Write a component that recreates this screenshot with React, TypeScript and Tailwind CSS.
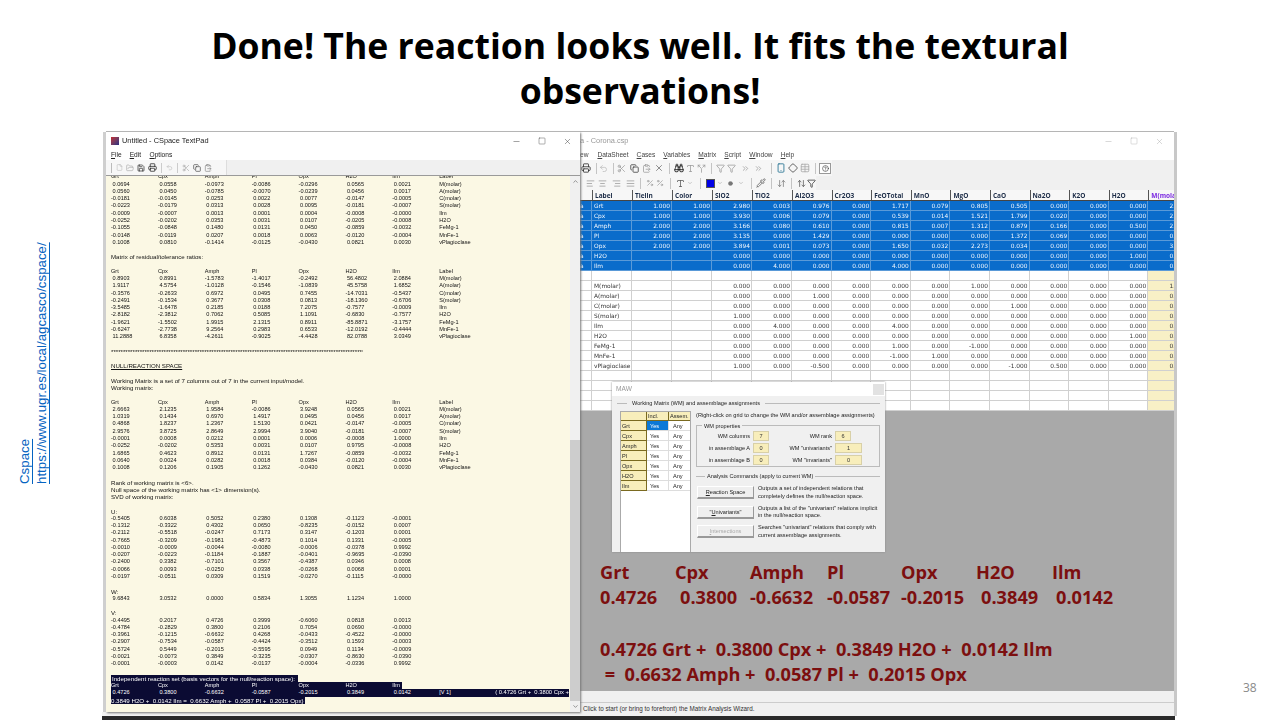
import React from "react";
import { Minus, Square, X, File, FolderOpen, Save, Printer, Undo2, Scissors, Copy, ClipboardPaste, ChevronUp, ChevronDown, Filter, Table, HelpCircle, ArrowDownUp, Diamond, ChevronsRight, Pipette, AlignLeft, AlignCenter, AlignRight, AlignJustify, Percent, Type, Circle, Smartphone, Split, Binoculars, ArrowUpDown } from "lucide-react";

type Row = string[];
const m1: Row[] = [
  ["0.0694","0.0558","-0.0973","-0.0086","-0.0296","0.0565","0.0021","M(molar)"],
  ["0.0560","0.0450","-0.0785","-0.0070","-0.0239","0.0456","0.0017","A(molar)"],
  ["-0.0181","-0.0145","0.0253","0.0022","0.0077","-0.0147","-0.0005","C(molar)"],
  ["-0.0223","-0.0179","0.0313","0.0028","0.0095","-0.0181","-0.0007","S(molar)"],
  ["-0.0009","-0.0007","0.0013","0.0001","0.0004","-0.0008","-0.0000","Ilm"],
  ["-0.0252","-0.0202","0.0353","0.0031","0.0107","-0.0205","-0.0008","H2O"],
  ["-0.1055","-0.0848","0.1480","0.0131","0.0450","-0.0859","-0.0032","FeMg-1"],
  ["-0.0148","-0.0119","0.0207","0.0018","0.0063","-0.0120","-0.0004","MnFe-1"],
  ["0.1008","0.0810","-0.1414","-0.0125","-0.0430","0.0821","0.0030","vPlagioclase"],
];
const m2: Row[] = [
  ["0.8903","0.8991","-1.5783","-1.4017","-0.2492","56.4802","2.0884","M(molar)"],
  ["1.9117","4.5754","-1.0128","-0.1546","-1.0839","45.5758","1.6852","A(molar)"],
  ["-0.3576","-0.2633","0.6972","0.0495","0.7455","-14.7031","-0.5437","C(molar)"],
  ["-0.2491","-0.1534","0.3677","0.0308","0.0813","-18.1360","-0.6706","S(molar)"],
  ["-3.5485","-1.6478","0.2185","0.0188","7.2075","-0.7577","-0.0009","Ilm"],
  ["-2.8182","-2.3812","0.7062","0.5085","1.1091","-0.6830","-0.7577","H2O"],
  ["-1.9621","-1.5502","1.9915","2.1315","0.8911","-85.8871","-3.1757","FeMg-1"],
  ["-0.6247","-2.7738","9.2564","0.2983","0.6533","-12.0192","-0.4444","MnFe-1"],
  ["11.2888","6.8358","-4.2611","-0.9025","-4.4428","82.0788","3.0349","vPlagioclase"],
];
const m3: Row[] = [
  ["2.6663","2.1235","1.9584","-0.0086","3.9248","0.0565","0.0021","M(molar)"],
  ["1.0319","0.1434","0.6970","1.4917","0.0495","0.0456","0.0017","A(molar)"],
  ["0.4868","1.8237","1.2367","1.5130","0.0421","-0.0147","-0.0005","C(molar)"],
  ["2.9576","3.8725","2.8649","2.9994","3.9040","-0.0181","-0.0007","S(molar)"],
  ["-0.0001","0.0008","0.0212","0.0001","0.0006","-0.0008","1.0000","Ilm"],
  ["-0.0252","-0.0202","0.5353","0.0031","0.0107","0.9795","-0.0008","H2O"],
  ["1.6865","0.4623","0.8912","0.0131","1.7267","-0.0859","-0.0032","FeMg-1"],
  ["0.0640","0.0024","0.0282","0.0018","0.0384","-0.0120","-0.0004","MnFe-1"],
  ["0.1008","0.1206","0.1905","0.1262","-0.0430","0.0821","0.0030","vPlagioclase"],
];
const mU: Row[] = [
  ["-0.5405","0.6038","0.5052","0.2380","0.1308","-0.1123","-0.0001"],
  ["-0.1312","-0.3322","0.4302","0.0650","-0.8235","-0.0152","0.0007"],
  ["-0.2112","-0.5518","-0.0247","0.7173","0.3147","-0.1203","0.0001"],
  ["-0.7665","-0.3209","-0.1981","-0.4873","0.1014","0.1331","-0.0005"],
  ["-0.0010","-0.0009","-0.0044","-0.0080","-0.0006","-0.0378","0.9992"],
  ["-0.0207","-0.0223","-0.1184","-0.1887","-0.0401","-0.9695","-0.0390"],
  ["-0.2400","0.3382","-0.7101","0.3567","-0.4387","0.0346","0.0008"],
  ["-0.0066","0.0093","-0.0250","0.0338","-0.0268","0.0068","0.0001"],
  ["-0.0197","-0.0511","0.0309","0.1519","-0.0270","-0.1115","-0.0000"],
];
const mV: Row[] = [
  ["-0.4495","0.2017","0.4726","0.3999","-0.6060","0.0818","0.0013"],
  ["-0.4784","-0.2829","0.3800","0.2106","0.7054","0.0690","-0.0000"],
  ["-0.3961","-0.1215","-0.6632","0.4268","-0.0433","-0.4522","-0.0000"],
  ["-0.2907","-0.7534","-0.0587","-0.4424","-0.3512","0.1593","-0.0003"],
  ["-0.5724","0.5449","-0.2015","-0.5595","0.0949","0.1134","-0.0009"],
  ["-0.0021","-0.0073","0.3849","-0.3235","-0.0307","-0.8630","-0.0390"],
  ["-0.0001","-0.0003","0.0142","-0.0137","-0.0004","-0.0336","0.9992"],
];
const H1 = ["Grt","Cpx","Amph","Pl","Opx","H2O","Ilm","Label"];
const H2 = ["Grt","Cpx","Amph","Pl","Opx","H2O","Ilm"];

function TxtRow({ cells, head = false, cls = "" }: { cells: Row; head?: boolean; cls?: string }) {
  return (
    <div className={"grid grid-cols-[46.9px_46.9px_46.9px_46.9px_46.9px_46.9px_46.9px_46.9px] h-[7.28px] text-[5.6px] " + cls}>
      {cells.map((c, i) => (
        <span key={i} className={i < 7 && !head && !c.startsWith("-") ? "pl-[1.5px]" : ""}>{c}</span>
      ))}
    </div>
  );
}
const Blank = () => <div className="h-[7.28px]" />;
const Para = ({ children, cls = "" }: { children: React.ReactNode; cls?: string }) => <div className={"h-[7.28px] text-[6.15px] " + cls}>{children}</div>;

function Matrix({ head, rows }: { head: Row; rows: Row[] }) {
  return (
    <>
      <TxtRow cells={head} head />
      {rows.map((r, i) => <TxtRow key={i} cells={r} />)}
    </>
  );
}

function TextPad() {
  return (
    <div className="absolute left-[106px] top-[132px] w-[474px] h-[580px] bg-white flex flex-col overflow-hidden shadow-[-3px_0_0_#cfcfcf,0_-1px_0_#b5b5b5,1px_1px_2px_#777] font-['Liberation_Sans',sans-serif] text-[#111] blur-[0.35px]">
      <div className="h-[18px] shrink-0 flex items-center pl-[5px] pr-[8px]">
        <div className="w-[8px] h-[8px] mr-[3px] bg-gradient-to-br from-[#c0272d] to-[#2a2a80]" />
        <span className="text-[7.4px] text-[#222]">Untitled - CSpace TextPad</span>
        <div className="ml-auto flex items-center gap-[17px] text-[#333]">
          <Minus size={9} strokeWidth={1.2} />
          <Square size={8} strokeWidth={1.2} />
          <X size={9} strokeWidth={1.2} />
        </div>
      </div>
      <div className="h-[10px] shrink-0 flex items-center pl-[5px] gap-[8px] text-[6.6px] text-[#222]">
        <span><u>F</u>ile</span><span><u>E</u>dit</span><span className="ml-[0.5px]"><u>O</u>ptions</span>
      </div>
      <div className="h-[16px] shrink-0 bg-[#f0f0f0] border-b border-[#9a9a9a] flex">
        <div className="bg-[#f7f7f7] h-full w-[121px] flex items-center pl-[5px] gap-[3px] border-r border-[#ddd]">
          <div className="w-px h-[10px] bg-[#bbb] mr-[1px]" />
          <File size={7} className="text-[#999]" strokeWidth={1.2} />
          <FolderOpen size={8} className="text-[#aaa]" />
          <Save size={8} className="text-[#222]" />
          <Printer size={9} className="text-[#222]" />
          <div className="w-px h-[10px] bg-[#ccc] mx-[1px]" />
          <Undo2 size={7} className="text-[#bbb]" />
          <div className="w-px h-[10px] bg-[#ccc] mx-[1px]" />
          <Scissors size={8} className="text-[#aaa]" />
          <Copy size={8} className="text-[#444]" />
          <ClipboardPaste size={8} className="text-[#888]" />
        </div>
      </div>
      <div className="flex-1 flex min-h-0">
        <div className="w-[464px] bg-[#fbf8e4] overflow-hidden pl-[5px] leading-[7.28px] whitespace-pre">
          <div className="-mt-[2.6px]">
            <Matrix head={H1} rows={m1} />
            <Blank />
            <Para>Matrix of residual/tolerance ratios:</Para>
            <Blank />
            <Matrix head={H1} rows={m2} />
            <Blank />
            <Para cls="overflow-hidden w-[252px]">{"*".repeat(110)}</Para>
            <Blank />
            <Para><u>NULL/REACTION SPACE</u></Para>
            <Blank />
            <Para>Working Matrix is a set of 7 columns out of 7 in the current input/model.</Para>
            <Para>Working matrix:</Para>
            <Blank />
            <Matrix head={H1} rows={m3} />
            <Blank />
            <Para>Rank of working matrix is &lt;6&gt;.</Para>
            <Para>Null space of the working matrix has &lt;1&gt; dimension(s).</Para>
            <Para>SVD of working matrix:</Para>
            <Blank />
            <Para>U:</Para>
            {mU.map((r, i) => <TxtRow key={i} cells={r} />)}
            <Blank />
            <Para>W:</Para>
            <TxtRow cells={["9.6843","3.0532","0.0000","0.5834","1.3055","1.1234","1.0000"]} />
            <Blank />
            <Para>V:</Para>
            {mV.map((r, i) => <TxtRow key={i} cells={r} />)}
            <Blank />
            <Para cls="bg-[#0b0b33] text-white w-[187px] pl-[1px]">Independent reaction set (basis vectors for the null/reaction space):</Para>
            <TxtRow cells={H2} head cls="bg-[#0b0b33] text-white w-[291px]" />
            <div className="relative w-[458px] h-[7.28px] bg-[#0b0b33] text-white">
              <TxtRow cells={["0.4726","0.3800","-0.6632","-0.0587","-0.2015","0.3849","0.0142","[V 1]"]} />
              <span className="absolute right-0 top-0 text-[5.8px]">( 0.4726 Grt +  0.3800 Cpx +</span>
            </div>
            <Para cls="bg-[#0b0b33] text-white w-[194px]">0.3849 H2O +  0.0142 Ilm =  0.6632 Amph +  0.0587 Pl +  0.2015 Opx)</Para>
          </div>
        </div>
        <div className="w-[10px] bg-[#f0f0f0] flex flex-col items-center text-[#555]">
          <ChevronUp size={7} className="mt-[2px] shrink-0" />
          <div className="mt-[255px] w-full flex-1 bg-[#cdcdcd]" />
          <ChevronDown size={7} className="my-[2px] shrink-0" />
        </div>
      </div>
    </div>
  );
}

const I = "text-[#999]";
const Bar = () => <div className="w-px h-[11px] bg-[#c4c4c4]" />;
type Item = [number, React.ReactNode];
function ToolRow({ items, cls }: { items: Item[]; cls: string }) {
  let prev = 578;
  return (
    <div className={"flex items-center " + cls}>
      {items.map(([x, el], i) => {
        const ml = x - 5 - prev;
        prev = x + 5;
        return <div key={i} className="w-[10px] h-[12px] flex items-center justify-center shrink-0" style={{ marginLeft: ml }}>{el}</div>;
      })}
    </div>
  );
}
const row1: Item[] = [
  [586,<Printer size={10} className="text-[#333]" />],[596,<Bar />],[603,<Undo2 size={9} className="text-[#bbb]" />],[613,<Bar />],
  [621,<Scissors size={9} className={I} />],[634,<Copy size={9} className="text-[#333]" />],[646,<ClipboardPaste size={9} className={I} />],[659,<X size={10} className="text-[#777]" />],[669,<Bar />],
  [679,<Binoculars size={10} className="text-[#111]" />],[690,<Type size={9} className={I} />],[701,<Split size={9} className={I} />],[711,<Bar />],
  [720,<Filter size={9} className={I} />],[731,<Filter size={9} className={I} />],[745,<ChevronsRight size={9} className={I} />],[758,<ChevronsRight size={9} className={I} />],[771,<Bar />],
  [781,<Smartphone size={10} className="text-[#1f6f8f]" />],[793,<Diamond size={10} className="text-[#444]" />],[805,<Table size={10} className="text-[#aaa]" />],[815,<Bar />],
  [825,<div className="w-[12px] h-[11px] border border-[#999] bg-white flex items-center justify-center shrink-0"><HelpCircle size={7} className="text-[#333]" /></div>],
];
const row2: Item[] = [
  [590,<AlignLeft size={9} className={I} />],[602,<AlignCenter size={9} className={I} />],[616,<AlignRight size={9} className={I} />],[630,<AlignJustify size={9} className={I} />],[640,<Bar />],
  [650,<Percent size={8} className={I} />],[660,<Percent size={8} className={I} />],[670,<Bar />],
  [680,<Type size={9} className="text-[#555]" />],[690,<ChevronDown size={6} className={I} />],[700,<Bar />],
  [710,<div className="w-[9px] h-[9px] bg-[#0000e6] shrink-0 border border-[#555]" />],[720,<ChevronDown size={6} className={I} />],[730,<Circle size={5} className="text-[#777] fill-[#777]" />],[741,<ChevronDown size={6} className={I} />],[751,<Bar />],
  [761,<Pipette size={10} className="text-[#666]" />],[771,<Bar />],[781,<ArrowDownUp size={9} className="text-[#777]" />],[791,<Bar />],
  [801,<ArrowUpDown size={9} className="text-[#555]" />],[811,<Filter size={9} className="text-[#333]" />],
];

function Toolbars() {
  return (
    <div className="h-[30px] shrink-0 bg-[#f0f0f0] flex flex-col">
      <ToolRow items={row1} cls="h-[16px] w-[254px] bg-[#f6f6f6]" />
      <ToolRow items={row2} cls="h-[14px] w-[238px] bg-[#f6f6f6]" />
    </div>
  );
}

const Z = "0.000";
const blueRows: Row[] = [
  ["Grt","1.000","1.000","2.980","0.003","0.976",Z,"1.717","0.079","0.805","0.505",Z,Z,Z,"2.000"],
  ["Cpx","1.000","1.000","3.930","0.006","0.079",Z,"0.539","0.014","1.521","1.799","0.020",Z,Z,"2.000"],
  ["Amph","2.000","2.000","3.166","0.080","0.610",Z,"0.815","0.007","1.312","0.879","0.166",Z,"0.500","2.000"],
  ["Pl","2.000","2.000","3.135",Z,"1.429",Z,Z,Z,Z,"1.372","0.069",Z,Z,"0.000"],
  ["Opx","2.000","2.000","3.894","0.001","0.073",Z,"1.650","0.032","2.273","0.034",Z,Z,Z,"3.000"],
  ["H2O","","",Z,Z,Z,Z,Z,Z,Z,Z,Z,Z,"1.000","0.000"],
  ["Ilm","","",Z,"4.000",Z,Z,"4.000",Z,Z,Z,Z,Z,Z,"0.000"],
];
const E: Row = ["","","","","","","","","","","","","","",""];
const lowRows: Row[] = [
  E,
  ["M(molar)","","",Z,Z,Z,Z,Z,Z,"1.000",Z,Z,Z,Z,"1.000"],
  ["A(molar)","","",Z,Z,"1.000",Z,Z,Z,Z,Z,Z,Z,Z,"0.000"],
  ["C(molar)","","",Z,Z,Z,Z,Z,Z,Z,"1.000",Z,Z,Z,"0.000"],
  ["S(molar)","","","1.000",Z,Z,Z,Z,Z,Z,Z,Z,Z,Z,"0.000"],
  ["Ilm","","",Z,"4.000",Z,Z,"4.000",Z,Z,Z,Z,Z,Z,"0.000"],
  ["H2O","","",Z,Z,Z,Z,Z,Z,Z,Z,Z,Z,"1.000","0.000"],
  ["FeMg-1","","",Z,Z,Z,Z,"1.000",Z,"-1.000",Z,Z,Z,Z,"0.000"],
  ["MnFe-1","","",Z,Z,Z,Z,"-1.000","1.000",Z,Z,Z,Z,Z,"0.000"],
  ["vPlagioclase","","","1.000",Z,"-0.500",Z,Z,Z,Z,"-1.000","0.500",Z,Z,"0.000"],
  E, E, E, E,
];
const colHead = ["Label","Tielin","Color","SiO2","TiO2","Al2O3","Cr2O3","FeOTotal","MnO","MgO","CaO","Na2O","K2O","H2O","M(molar)"];
const gridCols = "grid grid-cols-[14px_40px_40px_40px_40px_40px_39.6px_39.6px_39.6px_39.6px_39.6px_39.6px_39.6px_39.6px_39.6px_40px] shrink-0";

function DataGrid() {
  return (
    <div className="shrink-0 font-['DejaVu_Sans',sans-serif] text-[5.9px] leading-[10.5px]">
      <div className={gridCols + " h-[11px] border-b border-[#444] bg-[#f7f7f7] font-['Open_Sans',sans-serif] text-[6.5px]"}>
        <div />
        {colHead.map((h, i) => (
          <div key={h} className={"border-l border-[#555] pl-[2px] font-bold whitespace-nowrap overflow-hidden leading-[11px] " + (i === 14 ? "text-[#7a28e0]" : "text-[#1c2c47]")}>{h}</div>
        ))}
      </div>
      {blueRows.map((r, ri) => (
        <div key={ri} className={gridCols + " h-[10px] bg-[#0a6ccb] text-[#f2f7fd]"}>
          <div className="pl-[2px] overflow-hidden border-b border-r border-[#5a9ad8]">a</div>
          {r.map((c, i) => (
            <div key={i} className={"border-b border-r border-[#5a9ad8] whitespace-nowrap overflow-hidden " + (i === 0 ? "pl-[2px]" : "text-right pr-[1px]")}>{c}</div>
          ))}
        </div>
      ))}
      {lowRows.map((r, ri) => (
        <div key={ri} className={gridCols + " h-[10px] bg-white text-[#333]"}>
          <div className="border-b border-r border-[#d0d0d0]" />
          {r.map((c, i) => (
            <div key={i} className={"border-b border-r border-[#d0d0d0] whitespace-nowrap overflow-hidden " + (i === 0 ? "pl-[2px]" : "text-right pr-[1px]") + (i === 14 ? " bg-[#f8f0c6]" : "")}>{c}</div>
          ))}
        </div>
      ))}
    </div>
  );
}

function Spreadsheet() {
  const names = [["D","ataSheet"],["C","ases"],["V","ariables"],["M","atrix"],["S","cript"],["W","indow"],["H","elp"]];
  return (
    <div className="absolute left-[578px] top-[132px] w-[596px] h-[584px] bg-white flex flex-col overflow-hidden shadow-[0_-1px_0_#b5b5b5,3px_0_0_#c8c8c8] font-['Liberation_Sans',sans-serif] blur-[0.35px]">
      <div className="h-[18px] shrink-0 flex items-center pl-[2px] pr-[10px] text-[7.4px] text-[#999]">
        <span>a - Corona.csp</span>
        <div className="ml-auto flex items-center gap-[17px] text-[#aaa]">
          <Minus size={9} strokeWidth={1.2} />
          <Square size={8} strokeWidth={1.2} />
          <X size={9} strokeWidth={1.2} />
        </div>
      </div>
      <div className="h-[10px] shrink-0 flex items-center pl-[2px] gap-[8px] text-[6.6px] text-[#444]">
        <span className="mr-[1px]">ew</span>
        {names.map(([a, b]) => <span key={b}><u>{a}</u>{b}</span>)}
      </div>
      <Toolbars />
      <DataGrid />
      <div className="h-[280px] shrink-0 bg-[#a9a9a9] pl-[22px] pt-[149px] font-['Open_Sans',sans-serif] font-bold text-[18.2px] leading-[25px] text-[#7c0f0f] whitespace-pre">
        <div className="grid grid-cols-[75px_75px_77px_74px_75px_76px_60px]">
          {H2.map(h => <span key={h}>{h}</span>)}
        </div>
        <div className="grid grid-cols-[75px_75px_77px_74px_75px_76px_60px]">
          <span>0.4726</span><span className="pl-[5px]">0.3800</span><span>-0.6632</span><span>-0.0587</span><span>-0.2015</span><span className="pl-[5px]">0.3849</span><span className="pl-[4px]">0.0142</span>
        </div>
        <div className="mt-[28px] -translate-y-px">0.4726 Grt +  0.3800 Cpx +  0.3849 H2O +  0.0142 Ilm</div>
        <div className="-translate-y-px"> =  0.6632 Amph +  0.0587 Pl +  0.2015 Opx</div>
      </div>
      <div className="h-[11px] shrink-0 bg-[#f0f0f0]" />
      <div className="flex-1 bg-[#f0f0f0] border-t border-[#ccc] pl-[5px] text-[6.3px] leading-[12px] text-[#333]">Click to start (or bring to forefront) the Matrix Analysis Wizard.</div>
    </div>
  );
}

const wizRows = ["Grt","Cpx","Amph","Pl","Opx","H2O","Ilm"];
const Cell = ({ w, children }: { w: number; children: React.ReactNode }) => (
  <div className="h-[10px] bg-[#f8eebb] border border-[#d8d0a8] flex items-center justify-center text-[#333]" style={{ width: w }}>{children}</div>
);
function PropRow({ a, av, b, bv, bw }: { a: string; av: string; b: string; bv: string; bw: number }) {
  return (
    <div className="flex items-center h-[12px]">
      <div className="w-[51px] text-right">{a}</div>
      <div className="ml-[3px]"><Cell w={16}>{av}</Cell></div>
      <div className="w-[63px] text-right">{b}</div>
      <div className="ml-[3px]"><Cell w={bw}>{bv}</Cell></div>
    </div>
  );
}
function Cmd({ label, l1, l2, off = false }: { label: React.ReactNode; l1: string; l2: string; off?: boolean }) {
  return (
    <div className="flex items-center h-[19.5px]">
      <div className={"w-[57px] h-[13px] bg-[#efefef] border-b-2 border-r border-[#999] border-t border-l border-t-[#fff] border-l-[#fff] flex items-center justify-center " + (off ? "text-[#aaa]" : "text-[#222]")}>{label}</div>
      <div className="ml-[4px] leading-[7.6px]"><div>{l1}</div><div>{l2}</div></div>
    </div>
  );
}
function Wizard() {
  return (
    <div className="absolute left-[612px] top-[382px] w-[273px] h-[170px] bg-[#f0f0f0] overflow-hidden flex flex-col shadow-[0_0_2px_#888] font-['Liberation_Sans',sans-serif] text-[5.6px] text-[#222] whitespace-nowrap blur-[0.35px]">
      <div className="h-[14px] shrink-0 bg-white flex items-center pl-[4px] pr-[1px] text-[#999] text-[6.6px]">
        <span>MAW</span>
        <div className="ml-auto w-[11px] h-[11px] bg-[#e2e2e2]" />
      </div>
      <div className="flex items-center h-[15px] pl-[5px] pr-[5px] shrink-0">
        <div className="w-[10px] h-px bg-[#bbb]" />
        <span className="mx-[5px]">Working Matrix (WM) and assemblage assignments</span>
        <div className="flex-1 h-px bg-[#bbb]" />
      </div>
      <div className="flex flex-1 min-h-0">
        <div className="ml-[8px] w-[71px] bg-white flex flex-col border-r border-l border-[#aaa]">
          <div className="flex h-[10px] bg-[#f8eebb] border-t border-[#aaa]">
            <div className="w-[26px] border-r border-b border-[#7a6a20]" />
            <div className="w-[22px] border-r border-b border-[#7a6a20] pl-[1px]">Incl.</div>
            <div className="flex-1 border-b border-[#7a6a20] pl-[1px]">Assem.</div>
          </div>
          {wizRows.map((r, i) => (
            <div key={r} className="flex h-[10px] leading-[10px]">
              <div className="w-[26px] bg-[#f8eebb] border-r border-b border-[#7a6a20] pl-[1px]">{r}</div>
              <div className={"w-[22px] border-r border-b border-[#ddd] pl-[3px] " + (i === 0 ? "bg-[#0a78d7] text-white" : "")}>Yes</div>
              <div className="flex-1 border-b border-[#ddd] pl-[4px]">Any</div>
            </div>
          ))}
        </div>
        <div className="ml-[5px] w-[184px] flex flex-col">
          <div className="h-[14px] leading-[8px] text-[5.65px]">(Right-click on grid to change the WM and/or assemblage assignments)</div>
          <div className="relative h-[42px] border border-[#bbb] pt-[4px] pl-[2px]">
            <span className="absolute -top-[4px] left-[5px] bg-[#f0f0f0] px-[2px]">WM properties</span>
            <PropRow a="WM columns" av="7" b="WM rank" bv="6" bw={16} />
            <PropRow a="in assemblage A" av="0" b={'WM "univariants"'} bv="1" bw={27} />
            <PropRow a="in assemblage B" av="0" b={'WM "invariants"'} bv="0" bw={27} />
          </div>
          <div className="flex items-center h-[18px] -mb-[2px] shrink-0">
            <div className="w-[9px] h-px bg-[#bbb]" />
            <span className="mx-[2px]">Analysis Commands (apply to current WM)</span>
            <div className="flex-1 h-px bg-[#bbb]" />
          </div>
          <div className="pl-[1px]">
            <Cmd label={<span><u>R</u>eaction Space</span>} l1="Outputs a set of independent relations that" l2="completely defines the null/reaction space." />
            <Cmd label={<span>"<u>U</u>nivariants"</span>} l1={'Outputs a list of the "univariant" relations implicit'} l2="in the null/reaction space." />
            <Cmd off label={<span><u>I</u>ntersections</span>} l1={'Searches "univariant" relations that comply with'} l2="current assemblage assignments." />
          </div>
        </div>
      </div>
    </div>
  );
}

export default function App() {
  return (
    <div className="relative w-[1280px] h-[720px] bg-white overflow-hidden font-['Open_Sans',sans-serif]">
      <h1 className="pt-[23px] text-center text-[35.6px] leading-[45px] font-bold text-black w-[900px] mx-auto">
        Done! The reaction looks well. It fits the textural observations!
      </h1>
      <div className="absolute left-[16px] top-[243px] h-[241px] [writing-mode:vertical-rl] rotate-180 text-[13.3px] leading-[17px] text-[#0563c1] underline font-['Liberation_Sans',sans-serif] whitespace-nowrap">
        <div>Cspace</div>
        <div>https://www.ugr.es/local/agcasco/cspace/</div>
      </div>
      <Spreadsheet />
      <div className="absolute left-[102px] top-[712px] w-[478px] h-[4px] bg-[#f3f3f3]" />
      <TextPad />
      <Wizard />
      <div className="absolute left-[102px] top-[716px] w-[1073px] h-[4px] bg-[#2a2a2a]" />
      <div className="absolute left-[1243px] top-[679px] text-[12px] text-[#8a8a8a]">38</div>
    </div>
  );
}
